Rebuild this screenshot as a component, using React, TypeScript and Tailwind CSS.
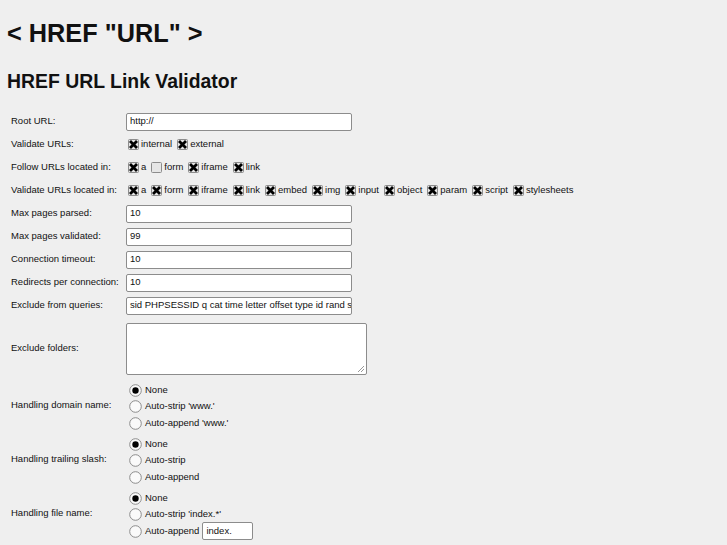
import React from 'react';

const font = { fontFamily: '"Liberation Sans", Arial, sans-serif' };

function Check({ on = true, label }: { on?: boolean; label: string }) {
  return (
    <span className="inline-flex items-center gap-[2px] mr-[5px]">
      <svg width="11" height="11" viewBox="0 0 11 11" className="shrink-0">
        <rect x="0.5" y="0.5" width="10" height="10" rx="1" fill="#e6e6e6" stroke="#8c8c8c" />
        {on && (
          <path d="M3 3 L8 8 M8 3 L3 8" stroke="#000" strokeWidth="2.8" strokeLinecap="square" />
        )}
      </svg>
      <span>{label}</span>
    </span>
  );
}

function Radio({ on = false, children }: { on?: boolean; children: React.ReactNode }) {
  return (
    <div className="flex items-center h-[16px] gap-[3px]">
      <svg width="13" height="13" viewBox="0 0 13 13" className="shrink-0">
        <circle cx="6.5" cy="6.5" r="5.8" fill="#fafafa" stroke="#8c8c8c" />
        {on && <circle cx="6.5" cy="6.5" r="3.2" fill="#000" />}
      </svg>
      <span className="flex items-center">{children}</span>
    </div>
  );
}

function TextInput({ value }: { value: string }) {
  return (
    <div className="w-[226px] h-[18px] bg-white border border-[#8c8c8c] rounded-[2px] pl-[3px] flex items-center overflow-hidden whitespace-nowrap">
      {value}
    </div>
  );
}

function Row({ label, children, h = 'h-[23px]' }: { label: string; children: React.ReactNode; h?: string }) {
  return (
    <div className={`flex items-center ${h}`}>
      <div className="w-[115px] shrink-0">{label}</div>
      <div className="flex items-center">{children}</div>
    </div>
  );
}

function RadioGroup({ label, options }: { label: string; options: React.ReactNode[] }) {
  return (
    <div className="flex items-center h-[54px]">
      <div className="w-[118px] shrink-0 -mt-[3px]">{label}</div>
      <div className="flex flex-col gap-[0.5px] -mt-[1px]">
        {options.map((o, i) => (
          <Radio key={i} on={i === 0}>
            {o}
          </Radio>
        ))}
      </div>
    </div>
  );
}

export default function App() {
  return (
    <div className="min-h-screen bg-[#efefef] text-[#111]" style={font}>
      <div className="pl-[7px] pt-[19px]">
        <h1 className="text-[25.3px] leading-[29px] font-bold">&lt; HREF "URL" &gt;</h1>
        <h2 className="text-[19.4px] leading-[22px] font-bold mt-[22px]">HREF URL Link Validator</h2>
      </div>

      <div className="pl-[11px] pt-[18px] text-[9.5px]">
        <Row label="Root URL:">
          <TextInput value="http://" />
        </Row>
        <Row label="Validate URLs:">
          <span className="pl-[2px] flex items-center">
            <Check label="internal" />
            <Check label="external" />
          </span>
        </Row>
        <Row label="Follow URLs located in:">
          <span className="pl-[2px] flex items-center">
            <Check label="a" />
            <Check on={false} label="form" />
            <Check label="iframe" />
            <Check label="link" />
          </span>
        </Row>
        <Row label="Validate URLs located in:">
          <span className="pl-[2px] flex items-center">
            {['a', 'form', 'iframe', 'link', 'embed', 'img', 'input', 'object', 'param', 'script', 'stylesheets'].map((t) => (
              <Check key={t} label={t} />
            ))}
          </span>
        </Row>
        <Row label="Max pages parsed:">
          <TextInput value="10" />
        </Row>
        <Row label="Max pages validated:">
          <TextInput value="99" />
        </Row>
        <Row label="Connection timeout:">
          <TextInput value="10" />
        </Row>
        <Row label="Redirects per connection:">
          <TextInput value="10" />
        </Row>
        <Row label="Exclude from queries:">
          <TextInput value="sid PHPSESSID q cat time letter offset type id rand s" />
        </Row>
        <Row label="Exclude folders:" h="h-[63px]">
          <div className="relative w-[241px] h-[52px] bg-white border border-[#8c8c8c] rounded-[2px]">
            <svg width="8" height="8" viewBox="0 0 8 8" className="absolute right-[1px] bottom-[1px]">
              <path d="M7 1 L1 7 M7 4 L4 7" stroke="#999" strokeWidth="1" />
            </svg>
          </div>
        </Row>

        <RadioGroup
          label="Handling domain name:"
          options={['None', "Auto-strip 'www.'", "Auto-append 'www.'"]}
        />
        <RadioGroup label="Handling trailing slash:" options={['None', 'Auto-strip', 'Auto-append']} />
        <RadioGroup
          label="Handling file name:"
          options={[
            'None',
            "Auto-strip 'index.*'",
            <span key="x" className="flex items-center gap-[3px]">
              Auto-append
              <span className="w-[51px] h-[18px] bg-white border border-[#8c8c8c] rounded-[2px] pl-[3px] flex items-center">
                index.
              </span>
            </span>,
          ]}
        />
      </div>
    </div>
  );
}
